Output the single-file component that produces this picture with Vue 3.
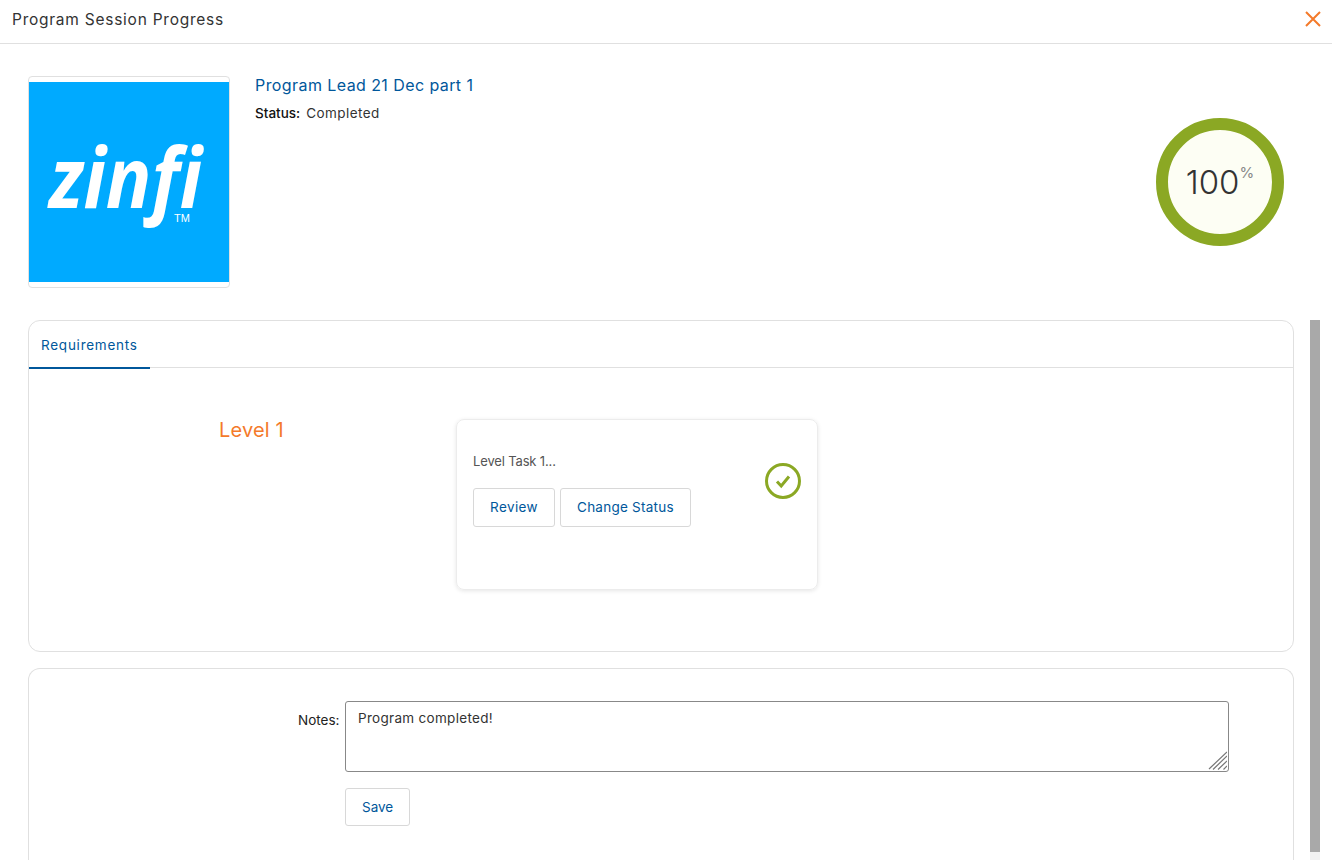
<script setup>
import { ref } from 'vue'

const percent = ref(100)
const notes = ref('Program completed!')
</script>

<template>
  <div class="page">
    <header class="top-bar">
      <span class="top-title">Program Session Progress</span>
      <svg class="close" viewBox="0 0 16 16" width="16" height="16">
        <path d="M1 1 L15 15 M15 1 L1 15" stroke="#f47a2a" stroke-width="2" fill="none" />
      </svg>
    </header>

    <section class="summary">
      <div class="logo-box">
        <svg class="logo" viewBox="0 0 200 200" width="200" height="200">
          <rect width="200" height="200" fill="#00aaff" />
          <g fill="#fff">
            <text class="logo-word" transform="translate(20 126) scale(0.9 1)">zinfi</text>
            <text class="logo-tm" x="145" y="140">TM</text>
          </g>
        </svg>
      </div>
      <div class="info">
        <a class="program-name">Program Lead 21 Dec part 1</a>
        <div class="status"><b>Status:</b><span>Completed</span></div>
      </div>
      <div class="ring">
        <span class="ring-num">{{ percent }}</span><sup class="ring-pct">%</sup>
      </div>
    </section>

    <div class="scroll-area">
      <div class="scroll-content">
        <section class="panel requirements">
          <div class="tabs">
            <div class="tab">Requirements</div>
          </div>
          <div class="level-row">
            <div class="level-name">Level 1</div>
            <div class="task-card">
              <div class="task-main">
                <div class="task-name">Level Task 1...</div>
                <div class="task-actions">
                  <button class="btn review">Review</button>
                  <button class="btn change">Change Status</button>
                </div>
              </div>
              <svg class="task-check" viewBox="0 0 36 36" width="36" height="36">
                <circle cx="18" cy="18" r="16.5" fill="none" stroke="#8ba824" stroke-width="3" />
                <path d="M12 18.5 L16.2 23 L24 13.5" fill="none" stroke="#8ba824" stroke-width="3" />
              </svg>
            </div>
          </div>
        </section>

        <section class="panel notes">
          <label class="notes-label">Notes:</label>
          <div class="notes-body">
            <div class="notes-wrap">
              <textarea v-model="notes" class="notes-input"></textarea>
              <svg class="grip" viewBox="0 0 20 20" width="20" height="20">
                <path d="M2 19 L20 2 M6 19.5 L20 6 M11 19.5 L20 11 M16.5 19.5 L20 16" stroke="#777" stroke-width="1.2" fill="none" />
              </svg>
            </div>
            <button class="btn save">Save</button>
          </div>
        </section>
      </div>
      <div class="scroll-track"><div class="scroll-thumb"></div></div>
    </div>
  </div>
</template>

<style scoped>
.page {
  width: 1332px;
  height: 864px;
  overflow: hidden;
  background: #fff;
  font-family: Inter, "Liberation Sans", sans-serif;
  color: #333;
}

.top-bar {
  height: 43px;
  box-sizing: content-box;
  border-bottom: 1px solid #e0e0e0;
  padding: 0 11px 0 12px;
  display: flex;
  align-items: center;
  justify-content: space-between;
}

.top-title {
  font-size: 15.5px;
  color: #333;
  letter-spacing: 0.75px;
  margin-bottom: 4px;
}

.close {
  margin-bottom: 5px;
}

.summary {
  height: 276px;
  display: flex;
  padding: 32px 48px 0 28px;
  box-sizing: border-box;
}

.logo-box {
  width: 202px;
  height: 212px;
  box-sizing: border-box;
  border: 1px solid #e0e0e0;
  border-radius: 4px;
  display: flex;
  align-items: center;
}

.logo-word {
  font-family: "Open Sans", sans-serif;
  font-size: 84px;
  font-weight: 700;
  font-style: italic;
}

.logo-tm {
  font-family: "Liberation Sans", sans-serif;
  font-size: 11px;
}

.info {
  margin-left: 25px;
  flex: 1;
}

.program-name {
  display: block;
  font-size: 16px;
  line-height: 18px;
  color: #00579b;
  letter-spacing: 0.42px;
}

.status {
  margin-top: 11px;
  font-size: 13.5px;
  display: flex;
  gap: 6px;
}

.status b {
  font-weight: 500;
  color: #111;
}

.status span {
  letter-spacing: 0.45px;
}

.ring {
  width: 128px;
  height: 128px;
  margin-top: 42px;
  box-sizing: border-box;
  border: 12px solid #8ba824;
  border-radius: 50%;
  background: #fdfef4;
  display: flex;
  align-items: center;
  justify-content: center;
}

.ring-num {
  font-size: 33px;
  font-weight: 300;
  color: #333;
}

.ring-pct {
  font-size: 15px;
  color: #888;
  align-self: flex-start;
  margin-top: 33px;
}

.scroll-area {
  display: flex;
  height: 540px;
}

.scroll-content {
  width: 1266px;
  margin-left: 28px;
  overflow: hidden;
}

.panel {
  box-sizing: border-box;
  border: 1px solid #e0e0e0;
  border-radius: 12px;
  background: #fff;
}

.requirements {
  height: 332px;
}

.tabs {
  height: 46px;
  border-bottom: 1px solid #e0e0e0;
}

.tab {
  width: 121px;
  height: 48px;
  box-sizing: border-box;
  padding: 16px 0 0 12px;
  font-size: 13.5px;
  letter-spacing: 0.75px;
  color: #00579b;
  border-bottom: 2px solid #00579b;
}

.level-row {
  display: flex;
  padding-top: 51px;
}

.level-name {
  width: 427px;
  padding: 0 172px 0 190px;
  box-sizing: border-box;
  font-size: 20px;
  letter-spacing: 0.15px;
  color: #f47a2a;
  line-height: 23px;
  white-space: nowrap;
}

.task-card {
  width: 362px;
  height: 171px;
  box-sizing: border-box;
  border: 1px solid #ececec;
  border-radius: 8px;
  box-shadow: 0 1px 4px rgba(0, 0, 0, 0.1);
  padding: 33px 16px 0 16px;
  display: flex;
  justify-content: space-between;
}

.task-name {
  font-size: 13px;
  letter-spacing: -0.15px;
  line-height: 16px;
  color: #555;
}

.task-actions {
  display: flex;
  gap: 5px;
  margin-top: 19px;
}

.btn {
  height: 39px;
  padding: 0 16px 1px;
  box-sizing: border-box;
  background: #fff;
  border: 1px solid #d8d8d8;
  border-radius: 3px;
  font-family: inherit;
  font-size: 13.5px;
  color: #00579b;
}

.review {
  letter-spacing: 0.4px;
}

.change {
  letter-spacing: 0.24px;
}

.task-check {
  margin-top: 10px;
}

.notes {
  margin-top: 16px;
  height: 220px;
  display: flex;
  padding: 32px 0 0 269px;
  border-bottom: none;
}

.notes-label {
  font-size: 13.5px;
  color: #222;
  margin-top: 11px;
  width: 47px;
}

.notes-body {
  display: flex;
  flex-direction: column;
  align-items: flex-start;
}

.notes-wrap {
  position: relative;
  height: 71px;
}

.notes-input {
  display: block;
  width: 884px;
  height: 71px;
  box-sizing: border-box;
  border: 1px solid #888;
  border-radius: 3px;
  padding: 8px 12px;
  font-family: inherit;
  font-size: 13.5px;
  letter-spacing: 0.3px;
  color: #333;
  outline: none;
  resize: none;
}

.grip {
  position: absolute;
  right: 2px;
  bottom: 2px;
}

.save {
  margin-top: 16px;
  height: 38px;
}

.scroll-track {
  width: 10px;
  margin-left: 16px;
  height: 540px;
  background: #f1f1f1;
}

.scroll-thumb {
  height: 532px;
  background: #a9a9a9;
}
</style>

<style>
html, body {
  margin: 0;
  background: #fff;
}
</style>
